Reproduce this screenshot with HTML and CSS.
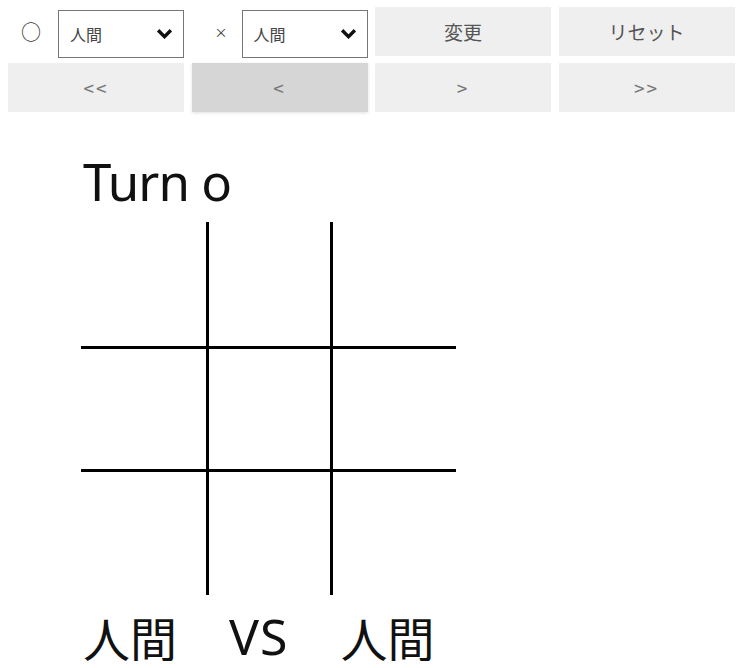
FILE: index.html
```html
<!DOCTYPE html>
<html lang="ja">
<head>
    <meta charset="UTF-8">
    <meta name="viewport" content="width=device-width, initial-scale=1.0">
    <title>まるばつ</title>
    <link rel="stylesheet" href="styles.css">
</head>

<body>
    <div class="controls">
        <div class="player">
            <span class="mark mark-o">○</span>
            <div class="select-wrap">
                <select id="playerO">
                    <option>人間</option>
                    <option>CPU</option>
                </select>
                <svg class="chevron" viewBox="0 0 16 10" width="17" height="11">
                    <path d="M2 2 L8 8 L14 2" fill="none" stroke="#111" stroke-width="3.2"/>
                </svg>
            </div>
        </div>
        <div class="player">
            <span class="mark mark-x">×</span>
            <div class="select-wrap">
                <select id="playerX">
                    <option>人間</option>
                    <option>CPU</option>
                </select>
                <svg class="chevron" viewBox="0 0 16 10" width="17" height="11">
                    <path d="M2 2 L8 8 L14 2" fill="none" stroke="#111" stroke-width="3.2"/>
                </svg>
            </div>
        </div>
        <button class="btn">変更</button>
        <button class="btn">リセット</button>

        <button class="btn small">&lt;&lt;</button>
        <button class="btn small active">&lt;</button>
        <button class="btn small">&gt;</button>
        <button class="btn small">&gt;&gt;</button>
    </div>

    <div class="game">
        <div class="turn">Turn o</div>
        <div class="board">
            <div class="cell"></div>
            <div class="cell"></div>
            <div class="cell"></div>
            <div class="cell"></div>
            <div class="cell"></div>
            <div class="cell"></div>
            <div class="cell"></div>
            <div class="cell"></div>
            <div class="cell"></div>
        </div>
        <div class="versus">
            <span>人間</span>
            <span class="vs">VS</span>
            <span>人間</span>
        </div>
    </div>
</body>

</html>
```

FILE: styles.css
```css
body {
    margin: 7px 0 0 8px;
    font-family: "Noto Sans CJK JP", "Noto Sans", sans-serif;
    background: #fff;
    color: #111;
}

.controls {
    display: grid;
    grid-template-columns: repeat(4, 176px);
    grid-auto-rows: 49px;
    column-gap: 7.5px;
    row-gap: 7px;
}

.player {
    display: flex;
    align-items: center;
    justify-content: space-between;
}

.mark {
    color: #333;
    line-height: 1;
}

.mark-o {
    font-size: 20px;
    margin-left: 13px;
}

.mark-x {
    font-size: 13px;
    margin-left: 23px;
}

.select-wrap {
    position: relative;
    width: 126px;
    height: 48px;
    margin-top: 4px;
}

.select-wrap select {
    appearance: none;
    box-sizing: border-box;
    width: 100%;
    height: 100%;
    border: 1px solid #767676;
    border-radius: 0;
    background: #fff;
    padding: 0 0 0 11px;
    font-family: "Noto Sans CJK JP", sans-serif;
    font-size: 16px;
    color: #444;
}

.chevron {
    position: absolute;
    right: 11px;
    top: 18px;
    pointer-events: none;
}

.btn {
    border: none;
    background: #efefef;
    color: #555;
    font-family: "Noto Sans CJK JP", sans-serif;
    font-size: 19px;
    padding: 0;
}

.btn.small {
    font-size: 19px;
    letter-spacing: 2px;
    color: #777;
}

.btn.active {
    background: #d6d6d6;
    box-shadow: 0 1px 3px rgba(0, 0, 0, 0.12);
}

.game {
    margin-left: 73px;
    width: 375px;
}

.turn {
    font-family: "Noto Sans", sans-serif;
    font-size: 51px;
    letter-spacing: -1px;
    line-height: 1;
    margin-top: 44px;
    margin-left: 2px;
}

.board {
    display: grid;
    grid-template-columns: 125px 121px 123px;
    grid-template-rows: 124px 120px 123px;
    gap: 3px;
    background: #000;
    width: 375px;
    margin-top: 15px;
}

.cell {
    background: #fff;
}

.versus {
    display: flex;
    align-items: center;
    gap: 52px;
    height: 50px;
    font-size: 47px;
    line-height: 1;
    margin-top: 16px;
    margin-left: 2px;
}

.vs {
    font-family: "Noto Sans", sans-serif;
    font-size: 50px;
    line-height: 1;
    letter-spacing: 1px;
}
```
